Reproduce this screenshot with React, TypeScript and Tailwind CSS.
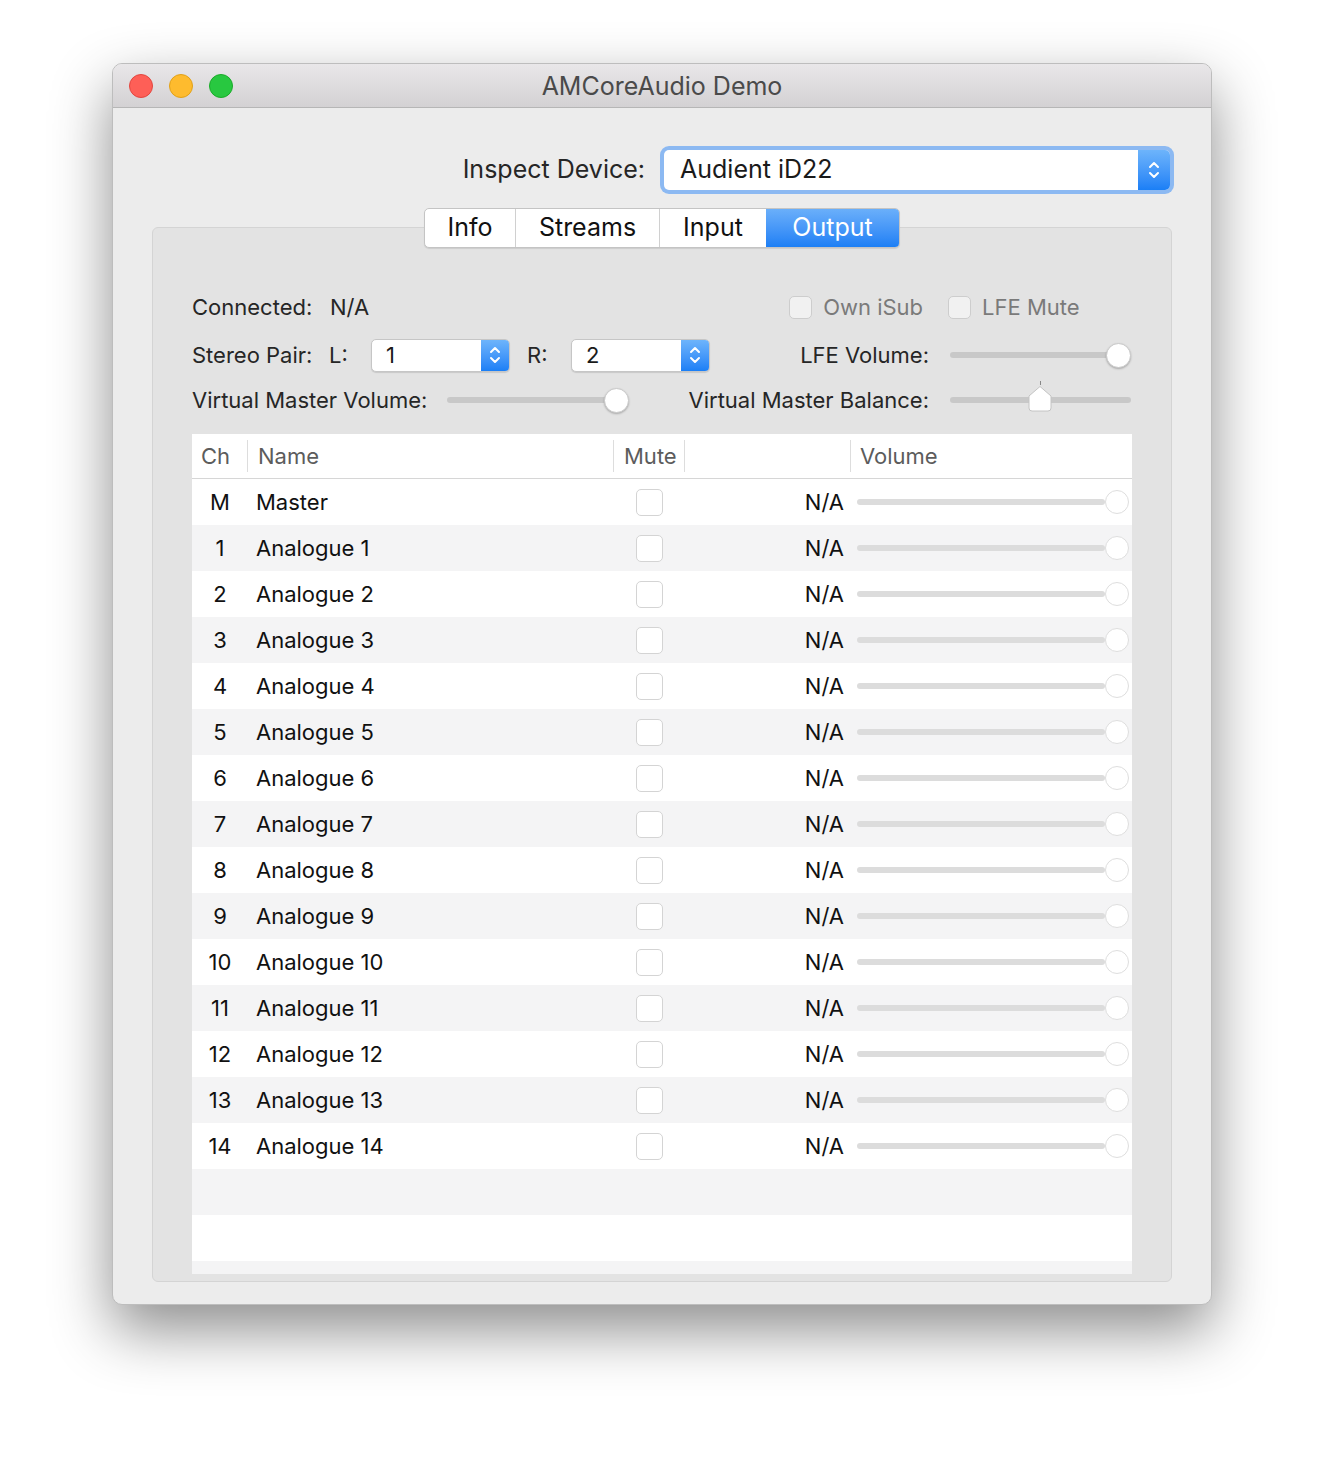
import React from "react";

const rows = [
  { ch: "M", name: "Master" },
  ...Array.from({ length: 14 }, (_, i) => ({ ch: String(i + 1), name: `Analogue ${i + 1}` })),
];

function Stepper({ className }: { className: string }) {
  return (
    <div className={`flex items-center justify-center bg-gradient-to-b from-[#6db4fb] to-[#1a7ff6] ${className}`}>
      <svg width="14" height="22" viewBox="0 0 14 22" fill="none" stroke="white" strokeWidth="2" strokeLinecap="round" strokeLinejoin="round">
        <path d="M3 8 L7 4 L11 8" />
        <path d="M3 14 L7 18 L11 14" />
      </svg>
    </div>
  );
}

function SmallPopup({ value }: { value: string }) {
  return (
    <div className="flex h-[33px] w-[139px] overflow-hidden rounded-[5px] border border-[#c6c6c6] bg-white shadow-[0_1px_1px_rgba(0,0,0,0.12)]">
      <div className="flex flex-1 items-center pl-[14px] text-[22px] text-[#1a1a1a]">{value}</div>
      <Stepper className="w-[28px]" />
    </div>
  );
}

function Knob({ faded }: { faded?: boolean }) {
  return (
    <div
      className={
        faded
          ? "h-[24px] w-[24px] shrink-0 rounded-full border border-[#dedede] bg-white"
          : "h-[25px] w-[25px] shrink-0 rounded-full border border-[#c9c9c9] bg-white shadow-[0_1px_2px_rgba(0,0,0,0.25)]"
      }
    />
  );
}

function Slider({ width }: { width: string }) {
  return (
    <div className={`flex items-center ${width}`}>
      <div className="h-[6px] flex-1 rounded-full bg-[#c8c8c8]" />
      <div className="-ml-[4px]">
        <Knob />
      </div>
    </div>
  );
}

function Checkbox({ faded }: { faded?: boolean }) {
  return (
    <div
      className={
        faded
          ? "h-[27px] w-[27px] rounded-[5px] border border-[#d4d4d4] bg-white"
          : "h-[23px] w-[23px] rounded-[5px] border border-[#cdcdcd] bg-[#f1f1f1]"
      }
    />
  );
}

export default function App() {
  return (
    <div className="min-h-[1466px] bg-white pl-[112px] pt-[63px] font-['Inter','Noto_Sans',sans-serif]">
      <div className="flex h-[1242px] w-[1100px] flex-col overflow-hidden rounded-[10px] border border-[#bdbdbd] bg-[#ececec] shadow-[0_25px_60px_rgba(0,0,0,0.45)]">
        {/* title bar */}
        <div className="relative flex h-[44px] shrink-0 items-center border-b border-[#b6b6b6] bg-gradient-to-b from-[#e9e7e9] to-[#d3d1d3] px-[16px]">
          <div className="flex gap-[16px]">
            <div className="h-[24px] w-[24px] rounded-full border border-[#e2463f] bg-[#fe5f57]" />
            <div className="h-[24px] w-[24px] rounded-full border border-[#e1a118] bg-[#febb2e]" />
            <div className="h-[24px] w-[24px] rounded-full border border-[#1aab29] bg-[#28c840]" />
          </div>
          <div className="pointer-events-none absolute inset-x-0 pt-[3px] text-center text-[25px] text-[#4a4a4a]">AMCoreAudio Demo</div>
        </div>

        {/* inspect device */}
        <div className="flex items-center justify-end pr-[41px] pt-[42px]">
          <span className="mr-[19px] text-[25px] text-[#262626]">Inspect Device:</span>
          <div className="flex h-[40px] w-[506px] overflow-hidden rounded-[5px] bg-white ring-4 ring-[#8cb9f2]">
            <div className="flex flex-1 items-center pl-[16px] text-[25px] text-[#1a1a1a]">Audient iD22</div>
            <Stepper className="w-[32px]" />
          </div>
        </div>

        {/* tab box */}
        <div className="mx-[39px] mt-[37px] flex h-[1055px] flex-col rounded-[6px] border border-[#d4d4d4] bg-[#e3e3e3]">
          <div className="-mt-[20px] flex h-[40px] self-center overflow-hidden rounded-[5px] border border-[#c4c4c4] bg-white text-[25px] text-[#111] shadow-[0_1px_1px_rgba(0,0,0,0.1)]">
            <div className="flex w-[91px] items-center justify-center border-r border-[#d0d0d0]">Info</div>
            <div className="flex w-[144px] items-center justify-center border-r border-[#d0d0d0]">Streams</div>
            <div className="flex w-[106px] items-center justify-center">Input</div>
            <div className="flex w-[133px] items-center justify-center bg-gradient-to-b from-[#6aaffa] to-[#1c7ff5] text-white">Output</div>
          </div>

          <div className="mt-[42px] flex flex-col px-[39px] text-[22px] text-[#262626]">
            {/* row 1 */}
            <div className="flex h-[34px] items-center">
              <span className="w-[138px]">Connected:</span>
              <span>N/A</span>
              <div className="ml-[420px] flex items-center gap-[11px] text-[#7a7a7a]">
                <Checkbox />
                <span>Own iSub</span>
              </div>
              <div className="ml-[25px] flex items-center gap-[11px] text-[#7a7a7a]">
                <Checkbox />
                <span>LFE Mute</span>
              </div>
            </div>

            {/* row 2 */}
            <div className="mt-[14px] flex h-[34px] items-center">
              <span className="w-[137px]">Stereo Pair:</span>
              <span className="w-[42px]">L:</span>
              <SmallPopup value="1" />
              <span className="ml-[17px] w-[44px]">R:</span>
              <SmallPopup value="2" />
              <span className="w-[219px] text-right">LFE Volume:</span>
              <div className="ml-[21px]">
                <Slider width="w-[181px]" />
              </div>
            </div>

            {/* row 3 */}
            <div className="mt-[11px] flex h-[34px] items-center">
              <span className="w-[255px]">Virtual Master Volume:</span>
              <Slider width="w-[182px]" />
              <span className="w-[300px] text-right">Virtual Master Balance:</span>
              <div className="relative ml-[21px] flex w-[181px] items-center">
                <div className="h-[6px] flex-1 rounded-full bg-[#c8c8c8]" />
                <div className="absolute left-[90px] top-[-16px] h-[4px] w-[1px] bg-[#888]" />
                <svg className="absolute left-[77px] top-[-12px]" width="26" height="28" viewBox="0 0 26 28">
                  <path d="M2 11 L13 1.5 L24 11 V23 a3 3 0 0 1 -3 3 H5 a3 3 0 0 1 -3 -3 Z" fill="white" stroke="#c4c4c4" strokeWidth="1" />
                </svg>
              </div>
            </div>

            {/* table */}
            <div className="mt-[17px] h-[840px] overflow-hidden bg-white">
              <div className="flex h-[45px] items-center border-b border-[#d6d6d6] text-[#5c5c5c]">
                <div className="flex h-[32px] w-[56px] items-center border-r border-[#dddddd] pl-[9px]">Ch</div>
                <div className="flex h-[32px] w-[366px] items-center border-r border-[#dddddd] pl-[10px]">Name</div>
                <div className="flex h-[32px] w-[71px] items-center border-r border-[#dddddd] pl-[10px]">Mute</div>
                <div className="h-[32px] w-[166px] border-r border-[#dddddd]" />
                <div className="flex h-[32px] flex-1 items-center pl-[9px]">Volume</div>
              </div>
              {rows.map((r, i) => (
                <div key={r.ch} className={`flex h-[46px] items-center text-[#111] ${i % 2 === 1 ? "bg-[#f4f4f5]" : "bg-white"}`}>
                  <div className="w-[56px] text-center">{r.ch}</div>
                  <div className="w-[366px] pl-[8px]">{r.name}</div>
                  <div className="flex w-[71px] justify-center">
                    <Checkbox faded />
                  </div>
                  <div className="w-[159px] text-right">N/A</div>
                  <div className="ml-[13px] flex w-[272px] items-center">
                    <div className="h-[6px] flex-1 rounded-full bg-[#dcdcdc]" />
                    <Knob faded />
                  </div>
                </div>
              ))}
              <div className="h-[46px] bg-[#f4f4f5]" />
              <div className="h-[46px] bg-white" />
              <div className="h-[46px] bg-[#f4f4f5]" />
            </div>
          </div>
        </div>
      </div>
    </div>
  );
}
